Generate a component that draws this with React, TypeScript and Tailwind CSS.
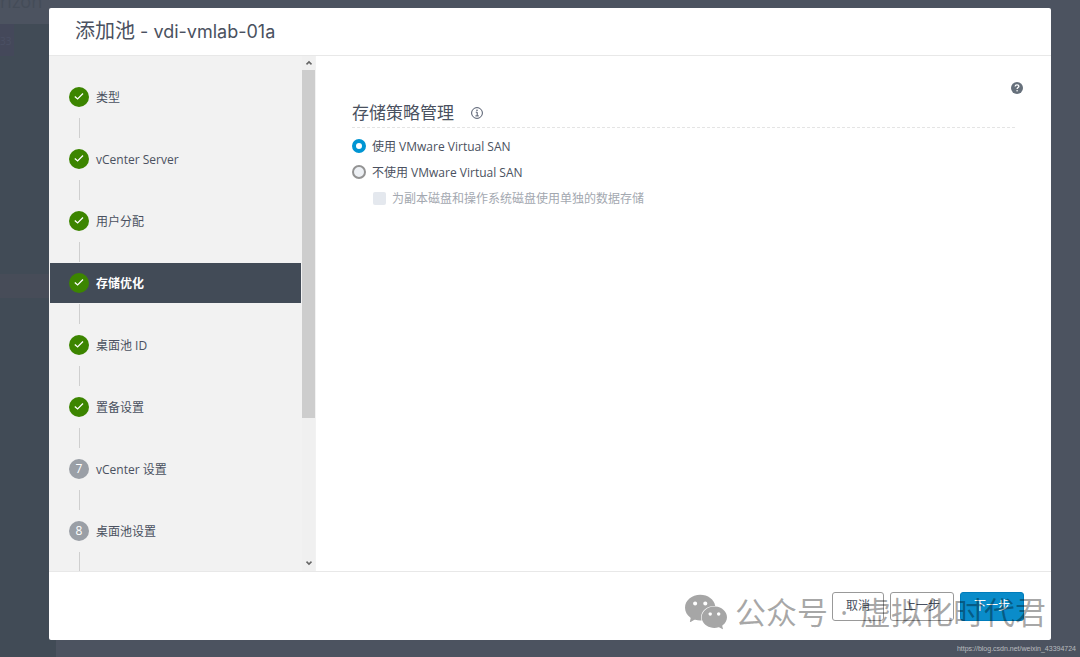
import { SiWechat } from "react-icons/si";

type Step = {
  label: string;
  state: "done" | "active" | "todo";
};

const steps: Step[] = [
  { label: "类型", state: "done" },
  { label: "vCenter Server", state: "done" },
  { label: "用户分配", state: "done" },
  { label: "存储优化", state: "active" },
  { label: "桌面池 ID", state: "done" },
  { label: "置备设置", state: "done" },
  { label: "vCenter 设置", state: "todo" },
  { label: "桌面池设置", state: "todo" },
];

const Backdrop = () => (
  <div className="absolute inset-0 flex flex-col bg-[#4c5360]" aria-hidden="true">
    <div className="h-6 shrink-0 overflow-hidden text-lg leading-none text-[#444c58]">
      <p className="-mt-2">rizon</p>
    </div>
    <div className="flex w-14 flex-1 flex-col bg-[#414b56]">
      <p className="h-8 w-3.5 bg-[#44485a] pt-3 text-[10px] leading-none text-[#4b5064]">
        33
      </p>
      <div className="mt-[218px] h-6 bg-[#474c58]" />
    </div>
  </div>
);

const CheckIcon = () => (
  <svg viewBox="0 0 20 20" className="size-5" fill="none" aria-hidden="true">
    <path d="M5.8 9.4 8.6 11.9 14 6.5" stroke="#fff" strokeWidth="1.3" />
  </svg>
);

const InfoIcon = () => (
  <svg viewBox="0 0 12 12" className="size-3" fill="none" aria-hidden="true">
    <circle cx="6" cy="6" r="5.4" stroke="#50586a" strokeWidth="1" />
    <circle cx="6" cy="3.3" r="0.8" fill="#50586a" />
    <path d="M4.8 5.2H6.2V8.8M4.4 8.9H7.8" stroke="#50586a" strokeWidth="1" />
  </svg>
);

const HelpIcon = () => (
  <svg viewBox="0 0 12 12" className="size-3" fill="none" aria-hidden="true">
    <circle cx="6" cy="6" r="6" fill="#66707b" />
    <path
      d="M4.1 4.5C4.2 3.3 5 2.8 6 2.8C7.1 2.8 7.9 3.4 7.9 4.3C7.9 5.5 6.1 5.6 6.1 7"
      stroke="#fff"
      strokeWidth="1.3"
    />
    <circle cx="6.1" cy="8.8" r="0.8" fill="#fff" />
  </svg>
);

const Chevron = ({ className = "" }: { className?: string }) => (
  <svg viewBox="0 0 8 8" className={`size-2 ${className}`} fill="none" aria-hidden="true">
    <path d="M1.5 5.4 4 2.9 6.5 5.4" stroke="#666" strokeWidth="1.5" />
  </svg>
);

const StepItem = ({ step, number }: { step: Step; number: number }) => {
  const active = step.state === "active";
  return (
    <li>
      <a
        href="#"
        aria-current={active ? "step" : undefined}
        className={`mx-px flex h-10 items-center gap-[7px] pl-[19px] ${
          active ? "bg-[#424b57] font-bold text-white" : ""
        }`}
      >
        <span
          className={`flex size-5 items-center justify-center rounded-full text-white ${
            step.state === "todo" ? "bg-[#9a9fa6]" : "bg-[#3c8500]"
          }`}
        >
          {step.state === "todo" ? number : <CheckIcon />}
        </span>
        <span className="pt-0.5">{step.label}</span>
      </a>
      <div className="my-px ml-[30px] h-5 w-px bg-[#cfcfcf]" />
    </li>
  );
};

const Sidebar = () => (
  <nav className="flex w-[267px] shrink-0 bg-[#f2f2f2] pr-px">
    <ol className="flex-1 overflow-hidden pt-[21px]">
      {steps.map((step, index) => (
        <StepItem key={step.label} step={step} number={index + 1} />
      ))}
    </ol>
    <div className="flex w-[13px] flex-col items-center bg-[#f0f0f0]">
      <button aria-label="向上滚动" className="flex h-3.5 items-center">
        <Chevron />
      </button>
      <div className="flex w-full flex-1 flex-col">
        <div className="h-[348px] bg-[#cdcdcd]" />
      </div>
      <button aria-label="向下滚动" className="flex h-4 items-center">
        <Chevron className="rotate-180" />
      </button>
    </div>
  </nav>
);

const radioClass =
  "size-3.5 appearance-none rounded-full border-2 border-[#939393] bg-[#edf0f4] checked:border-[4px] checked:border-[#0095d3] checked:bg-white";

const StoragePolicy = () => (
  <main className="flex-1 pt-[26px]">
    <div className="flex justify-end pr-7">
      <button aria-label="帮助">
        <HelpIcon />
      </button>
    </div>
    <form className="mx-9">
      <div className="mt-1 flex h-[30px] items-center gap-[17px] border-b border-dashed border-[#e4e4e4]">
        <h2 className="text-[17px] leading-6">存储策略管理</h2>
        <button type="button" aria-label="信息">
          <InfoIcon />
        </button>
      </div>
      <div className="mt-[5px]">
        <label className="flex h-[26px] items-center gap-[6px]">
          <input type="radio" name="vsan" defaultChecked className={radioClass} />
          <span className="pt-0.5">使用 VMware Virtual SAN</span>
        </label>
        <label className="flex h-[26px] items-center gap-[6px]">
          <input type="radio" name="vsan" className={radioClass} />
          <span className="pt-0.5">不使用 VMware Virtual SAN</span>
        </label>
        <label className="ml-[21px] flex h-[26px] items-center gap-[6px] text-[#a3a8b0]">
          <input
            type="checkbox"
            disabled
            className="size-[13px] appearance-none rounded-xs bg-[#e4e8ee]"
          />
          <span className="pt-0.5">为副本磁盘和操作系统磁盘使用单独的数据存储</span>
        </label>
      </div>
    </form>
  </main>
);

const Footer = () => (
  <footer className="flex h-[69px] shrink-0 items-center justify-end gap-1.5 border-t border-[#e8e8e8] pr-[27px]">
    <button className="h-[29px] w-[52px] rounded-[3px] border border-[#999]">取消</button>
    <button className="h-[29px] w-16 rounded-[3px] border border-[#999]">上一步</button>
    <button className="h-[29px] w-16 rounded-[3px] border border-[#007cbb] bg-[#0a8cca] text-white">
      下一步
    </button>
  </footer>
);

const Watermark = () => (
  <div className="pointer-events-none absolute right-[34px] bottom-6 flex items-center text-[31px] leading-10 text-black/35">
    <SiWechat className="mr-2 size-[42px]" />
    <span>公众号</span>
    <span className="w-8 text-center">·</span>
    <span>虚拟化时代君</span>
  </div>
);

export default function App() {
  return (
    <div className="relative h-screen overflow-hidden font-['Open_Sans','Noto_Sans_CJK_SC',sans-serif] text-xs text-[#4a5160]">
      <Backdrop />
      <div className="relative flex h-full pt-2 pr-[29px] pb-[17px] pl-[49px]">
        <div
          role="dialog"
          aria-labelledby="dialog-title"
          className="flex min-w-0 flex-1 flex-col overflow-hidden rounded-xs bg-white"
        >
          <header className="flex h-12 shrink-0 items-center border-b border-[#e8e8e8] pl-[26px]">
            <h1
              id="dialog-title"
              className="font-[Inter,'Noto_Sans_CJK_SC',sans-serif] text-[20px] leading-7"
            >
              添加池<span className="text-lg leading-7"> - vdi-vmlab-01a</span>
            </h1>
          </header>
          <div className="flex min-h-0 flex-1">
            <Sidebar />
            <StoragePolicy />
          </div>
          <Footer />
        </div>
      </div>
      <Watermark />
      <p className="absolute right-1 bottom-0.5 font-['Liberation_Sans',sans-serif] text-[7px] leading-3 text-white/60">
        https://blog.csdn.net/weixin_43394724
      </p>
    </div>
  );
}
